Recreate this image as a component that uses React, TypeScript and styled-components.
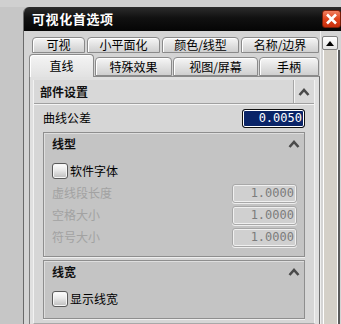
import React from 'react';
import styled, { createGlobalStyle } from 'styled-components';

const Global = createGlobalStyle`
  html, body { margin: 0; padding: 0; background: #c8c8c8; }
  body { font-family: "Noto Sans CJK SC", "Noto Sans", sans-serif; font-size: 12px; }
`;

const Screen = styled.div`
  width: 341px;
  height: 324px;
  overflow: hidden;
  box-sizing: border-box;
  padding: 7px 0 0 23px;
  display: flex;
  background: linear-gradient(#d0d0d0 0, #d0d0d0 7px, #c6c6c6 7px);
`;

const Window = styled.div`
  flex: 1;
  display: flex;
  flex-direction: column;
  border-top-left-radius: 6px;
  overflow: hidden;
  background: #d4d4d4;
  border-left: 1px solid #6a6a6a;
`;

const TitleBar = styled.div`
  height: 24px;
  flex: none;
  display: flex;
  align-items: center;
  justify-content: space-between;
  padding-left: 8px;
  background: linear-gradient(#2c2c2c, #111 45%, #050505);
  color: #fff;
  font-weight: bold;
  font-size: 13px;
  letter-spacing: 0.6px;
  line-height: 24px;
`;

const CloseButton = styled.div`
  width: 19px;
  height: 18px;
  box-sizing: border-box;
  border: 1px solid #7a1e08;
  border-radius: 3px;
  background: linear-gradient(#f08060, #e0441c 50%, #c82e0c);
  display: flex;
  align-items: center;
  justify-content: center;
`;

const Body = styled.div`
  flex: 1;
  display: flex;
  padding-left: 5px;
  min-height: 0;
`;

const Main = styled.div`
  width: 291px;
  display: flex;
  flex-direction: column;
  padding-top: 6px;
`;

const TabRow = styled.div<{ $h: number; $pl: number; $gap: number }>`
  display: flex;
  align-items: flex-end;
  height: ${p => p.$h}px;
  padding-left: ${p => p.$pl}px;
  gap: ${p => p.$gap}px;
  position: relative;
  z-index: 1;
`;

const Tab = styled.div<{ $w: number; $h: number; $active?: boolean }>`
  width: ${p => p.$w}px;
  height: ${p => p.$h}px;
  box-sizing: border-box;
  border: 1px solid #8a8a8a;
  border-bottom: ${p => (p.$active ? 'none' : '1px solid #8a8a8a')};
  border-radius: 4px 4px 0 0;
  background: ${p =>
    p.$active ? 'linear-gradient(#f4f4f4, #e2e2e2)' : 'linear-gradient(#f6f6f6, #dedede 60%, #cfcfcf)'};
  box-shadow: inset 1px 1px 0 #ffffff;
  display: flex;
  align-items: center;
  justify-content: center;
  font-size: 12px;
  line-height: 14px;
  color: #000;
  margin-bottom: ${p => (p.$active ? '-1px' : '0')};
`;

const Panel = styled.div`
  flex: 1;
  border-left: 1px solid #7c7c7c;
  border-top: 1px solid #8a8a8a;
  border-right: 1px solid #6e6e6e;
  padding: 3px 4px 0 3px;
  background: #e0e0e0;
`;

const Section = styled.div`
  width: 282px;
  background: #d6d6d6;
  border-left: 1px solid #f2f2f2;
  border-right: 1px solid #f2f2f2;
  box-sizing: border-box;
  padding-bottom: 4px;
  border-bottom: 1px solid #a8a8a8;
`;

const SectionHeader = styled.div`
  height: 23px;
  display: flex;
  align-items: center;
  border-bottom: 1px solid #a0a0a0;
  box-shadow: 0 1px 0 #f4f4f4;
  background: #d8d8d8;
`;

const HeaderTitle = styled.div`
  flex: 1;
  padding-left: 6px;
  font-weight: bold;
  font-size: 12px;
  line-height: 14px;
  color: #111;
`;

const ChevronCell = styled.div`
  width: 20px;
  height: 100%;
  border-left: 1px solid #a6a6a6;
  box-shadow: inset 1px 0 0 #f4f4f4;
  display: flex;
  align-items: center;
  justify-content: center;
`;

const FieldRow = styled.div<{ $h: number; $pl: number; $pr: number; $disabled?: boolean }>`
  height: ${p => p.$h}px;
  display: flex;
  align-items: center;
  justify-content: space-between;
  padding: 0 ${p => p.$pr}px 0 ${p => p.$pl}px;
  font-size: 12px;
  line-height: 14px;
  color: ${p => (p.$disabled ? '#a2a2a2' : '#000')};
`;

const ValueBox = styled.div<{ $w: number; $active?: boolean }>`
  width: ${p => p.$w}px;
  height: 19px;
  box-sizing: border-box;
  border-radius: 3px;
  overflow: hidden;
  white-space: nowrap;
  text-align: right;
  padding-right: 2px;
  font-family: "DejaVu Sans Mono", "Liberation Mono", monospace;
  font-size: 12px;
  line-height: 17px;
  ${p =>
    p.$active
      ? `background:#0a2468; color:#fff; border:1px solid #111; box-shadow: inset 0 0 0 1px #fff;`
      : `background:#d0d0d0; color:#7c7c7c; border:1px solid #a8a8a8; box-shadow: inset 0 0 0 1px #f0f0f0, 0 1px 0 #eee;`}
`;

const Group = styled.div<{ $mt: number }>`
  margin: ${p => p.$mt}px 9px 0 9px;
  background: #c4c4c4;
  border: 1px solid #8e8e8e;
  box-shadow: inset 1px 1px 0 #dedede, 0 1px 0 #efefef;
  padding-bottom: 8px;
`;

const GroupHeader = styled.div`
  height: 22px;
  display: flex;
  align-items: center;
  justify-content: space-between;
  padding: 0 4px 0 8px;
  font-weight: bold;
  font-size: 12px;
  line-height: 14px;
  color: #111;
`;

const CheckRow = styled.label`
  display: flex;
  align-items: center;
  gap: 2px;
  padding-left: 8px;
  height: 22px;
  margin-top: 5px;
  font-size: 12px;
  line-height: 14px;
  color: #000;
`;

const CheckBox = styled.span`
  width: 16px;
  height: 16px;
  box-sizing: border-box;
  border: 1px solid #5a5a5a;
  border-radius: 3px;
  background: linear-gradient(#ffffff, #e8e8e8 45%, #bdbdbd);
  box-shadow: inset 0 0 0 1px #f6f6f6;
`;

const ScrollCol = styled.div`
  width: 21px;
  display: flex;
  flex-direction: column;
  border-left: 1px solid #efefef;
  padding-top: 5px;
  box-sizing: border-box;
`;

const UpButton = styled.div`
  width: 16px;
  height: 14px;
  margin-left: 1px;
  box-sizing: border-box;
  border: 1px solid #808080;
  border-radius: 2px;
  background: linear-gradient(#ffffff, #e4e4e4);
  display: flex;
  align-items: center;
  justify-content: center;
`;

const Track = styled.div`
  flex: 1;
  width: 13px;
  margin-left: 2px;
  background: #d4d0c8;
  border-left: 1px solid #fff;
  border-right: 1px solid #fff;
  box-shadow: 2px 0 0 #5a5a5a;
`;

const Chevron = () => (
  <svg width="12" height="8" viewBox="0 0 12 8">
    <polyline points="1.5,7 6,2 10.5,7" fill="none" stroke="#4a4a4a" strokeWidth="2.6" />
  </svg>
);

export default function App() {
  return (
    <>
      <Global />
      <Screen>
        <Window>
          <TitleBar>
            <span>可视化首选项</span>
            <CloseButton>
              <svg width="13" height="12" viewBox="0 0 13 12">
                <path d="M2 1.5 L11 10.5 M11 1.5 L2 10.5" stroke="#fff" strokeWidth="2.6" />
              </svg>
            </CloseButton>
          </TitleBar>
          <Body>
            <Main>
              <TabRow $h={16} $pl={3} $gap={2}>
                <Tab $w={53} $h={16}>可视</Tab>
                <Tab $w={73} $h={16}>小平面化</Tab>
                <Tab $w={77} $h={16}>颜色/线型</Tab>
                <Tab $w={78} $h={16}>名称/边界</Tab>
              </TabRow>
              <TabRow $h={23} $pl={0} $gap={1}>
                <Tab $w={65} $h={23} $active>直线</Tab>
                <Tab $w={77} $h={19}>特殊效果</Tab>
                <Tab $w={85} $h={19}>视图/屏幕</Tab>
                <Tab $w={60} $h={19}>手柄</Tab>
              </TabRow>
              <Panel>
                <Section>
                  <SectionHeader>
                    <HeaderTitle>部件设置</HeaderTitle>
                    <ChevronCell>
                      <Chevron />
                    </ChevronCell>
                  </SectionHeader>
                  <FieldRow $h={28} $pl={9} $pr={9}>
                    <span>曲线公差</span>
                    <ValueBox $w={63} $active>0.0050</ValueBox>
                  </FieldRow>
                  <Group $mt={0}>
                    <GroupHeader>
                      <span>线型</span>
                      <Chevron />
                    </GroupHeader>
                    <CheckRow>
                      <CheckBox />
                      <span>软件字体</span>
                    </CheckRow>
                    <FieldRow $h={22} $pl={8} $pr={7} $disabled>
                      <span>虚线段长度</span>
                      <ValueBox $w={65}>1.0000</ValueBox>
                    </FieldRow>
                    <FieldRow $h={22} $pl={8} $pr={7} $disabled>
                      <span>空格大小</span>
                      <ValueBox $w={65}>1.0000</ValueBox>
                    </FieldRow>
                    <FieldRow $h={22} $pl={8} $pr={7} $disabled>
                      <span>符号大小</span>
                      <ValueBox $w={65}>1.0000</ValueBox>
                    </FieldRow>
                  </Group>
                  <Group $mt={3}>
                    <GroupHeader>
                      <span>线宽</span>
                      <Chevron />
                    </GroupHeader>
                    <CheckRow>
                      <CheckBox />
                      <span>显示线宽</span>
                    </CheckRow>
                  </Group>
                </Section>
              </Panel>
            </Main>
            <ScrollCol>
              <UpButton>
                <svg width="8" height="5" viewBox="0 0 8 5">
                  <polygon points="0,5 4,0 8,5" fill="#000" />
                </svg>
              </UpButton>
              <Track />
            </ScrollCol>
          </Body>
        </Window>
      </Screen>
    </>
  );
}
